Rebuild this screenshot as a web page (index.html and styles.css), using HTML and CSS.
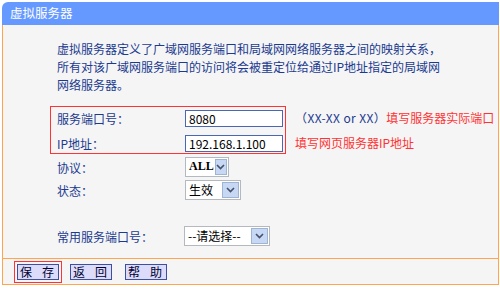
FILE: index.html
```html
<!DOCTYPE html>
<html lang="zh-CN">
<head>
  <meta charset="UTF-8" />
  <title>虚拟服务器</title>
  <link rel="stylesheet" href="styles.css">
</head>
<body>
  <div class="wrap">
    <div class="title-bar">虚拟服务器</div>
    <div class="panel">
      <div class="content">
        <p class="desc">虚拟服务器定义了广域网服务端口和局域网网络服务器之间的映射关系，<br>所有对该广域网服务端口的访问将会被重定位给通过IP地址指定的局域网<br>网络服务器。</p>

        <div class="pair">
          <div class="red-box">
            <div class="row">
              <span class="label">服务端口号：</span>
              <input class="text-input" type="text" value="8080">
            </div>
            <div class="row">
              <span class="label">IP地址：</span>
              <input class="text-input" type="text" value="192.168.1.100">
            </div>
          </div>
          <div class="hints">
            <div class="hint"><span class="blue">（XX-XX or XX）</span>填写服务器实际端口</div>
            <div class="hint">填写网页服务器IP地址</div>
          </div>
        </div>

        <div class="row sel-row">
          <span class="label">协议：</span>
          <div class="select w-all">
            <span class="sel-text bold">ALL</span>
            <span class="sel-btn"><svg width="9" height="6" viewBox="0 0 9 6"><path d="M1 1 L4.5 4.5 L8 1" fill="none" stroke="#46506a" stroke-width="1.6"/></svg></span>
          </div>
        </div>
        <div class="row sel-row">
          <span class="label">状态：</span>
          <div class="select w-state">
            <span class="sel-text">生效</span>
            <span class="sel-btn"><svg width="9" height="6" viewBox="0 0 9 6"><path d="M1 1 L4.5 4.5 L8 1" fill="none" stroke="#46506a" stroke-width="1.6"/></svg></span>
          </div>
        </div>
        <div class="row sel-row common">
          <span class="label">常用服务端口号：</span>
          <div class="select w-common">
            <span class="sel-text">--请选择--</span>
            <span class="sel-btn"><svg width="9" height="6" viewBox="0 0 9 6"><path d="M1 1 L4.5 4.5 L8 1" fill="none" stroke="#46506a" stroke-width="1.6"/></svg></span>
          </div>
        </div>
      </div>

      <div class="footer">
        <div class="btn-mark">
          <button class="btn"><span>保</span><span>存</span></button>
        </div>
        <button class="btn back"><span>返</span><span>回</span></button>
        <button class="btn help"><span>帮</span><span>助</span></button>
      </div>
    </div>
  </div>
</body>
</html>
```

FILE: styles.css
```css
body {
  margin: 0;
  background: #fff;
  font-family: "Noto Sans CJK SC", "Liberation Sans", sans-serif;
  font-size: 12px;
}

.wrap {
  width: 497px;
  margin: 2px 0 0 2px;
}

.title-bar {
  height: 23px;
  line-height: 22px;
  padding-left: 8px;
  background: #6699ff;
  color: #fff;
  font-size: 12.5px;
  border-top-left-radius: 6px;
}

.panel {
  background: #f5f5f5;
  border-left: 1px solid #ffa64d;
  border-right: 1px solid #ffa64d;
  border-bottom: 1px solid #ffa64d;
}

.content {
  padding: 15px 0 12px 47px;
  border-bottom: 1px solid #ffa64d;
  color: #1b3a90;
}

.desc {
  margin: 0 0 12px 7px;
  line-height: 18px;
}

.pair {
  display: flex;
  align-items: flex-start;
}

.red-box {
  border: 1px solid #ff3333;
  padding: 3px 2px 1px 6px;
  display: flex;
  flex-direction: column;
  gap: 8px;
}

.row {
  display: flex;
  align-items: center;
  height: 17px;
}

.label {
  width: 128px;
  flex: none;
}

.text-input {
  box-sizing: border-box;
  width: 98px;
  height: 17px;
  margin: 0;
  padding: 0 3px;
  border: 1px solid #4a67b5;
  background: #fff;
  font: 12px "Noto Sans CJK SC", "Liberation Sans", sans-serif;
  color: #000;
  outline: none;
}

.hints {
  margin-left: 9px;
  padding-top: 3px;
  display: flex;
  flex-direction: column;
  gap: 7px;
}

.hint {
  height: 18px;
  line-height: 18px;
  color: #ff3333;
  white-space: nowrap;
}

.hint .blue {
  color: #1b3a90;
  letter-spacing: 0.4px;
}

.sel-row {
  height: 20px;
  padding-left: 7px;
  margin-top: 3px;
}

.sel-row.common {
  margin-top: 26px;
}

.select {
  box-sizing: border-box;
  height: 20px;
  display: flex;
  align-items: stretch;
  border: 1px solid #b4b9c0;
  background: #fff;
  color: #000;
}

.w-all { width: 44px; }
.w-state { width: 56px; }
.w-common { width: 86px; margin-left: -1px; }

.sel-text {
  flex: 1;
  padding-left: 3px;
  line-height: 17px;
  white-space: nowrap;
}

.bold {
  font-weight: bold;
  font-family: "Liberation Serif", serif;
}

.sel-btn {
  width: 15px;
  margin: 1px;
  border: 1px solid #9fb3d3;
  background: #c6d8f3;
  display: flex;
  align-items: center;
  justify-content: center;
}

.footer {
  height: 25px;
  display: flex;
  align-items: center;
  padding-left: 11px;
}

.btn-mark {
  border: 1px solid #ff3333;
  padding: 2px;
  display: flex;
}

.btn {
  box-sizing: border-box;
  width: 42px;
  height: 16px;
  margin: 0;
  padding: 0 4px 0 2px;
  border: 1px solid #3d4f9e;
  background: #dcdcfa;
  color: #000033;
  font: 12px "Noto Sans CJK SC", "Liberation Sans", sans-serif;
  line-height: 14px;
  display: flex;
  justify-content: space-between;
  align-items: center;
}

.back {
  margin-left: 8px;
}

.help {
  margin-left: 13px;
}
```
